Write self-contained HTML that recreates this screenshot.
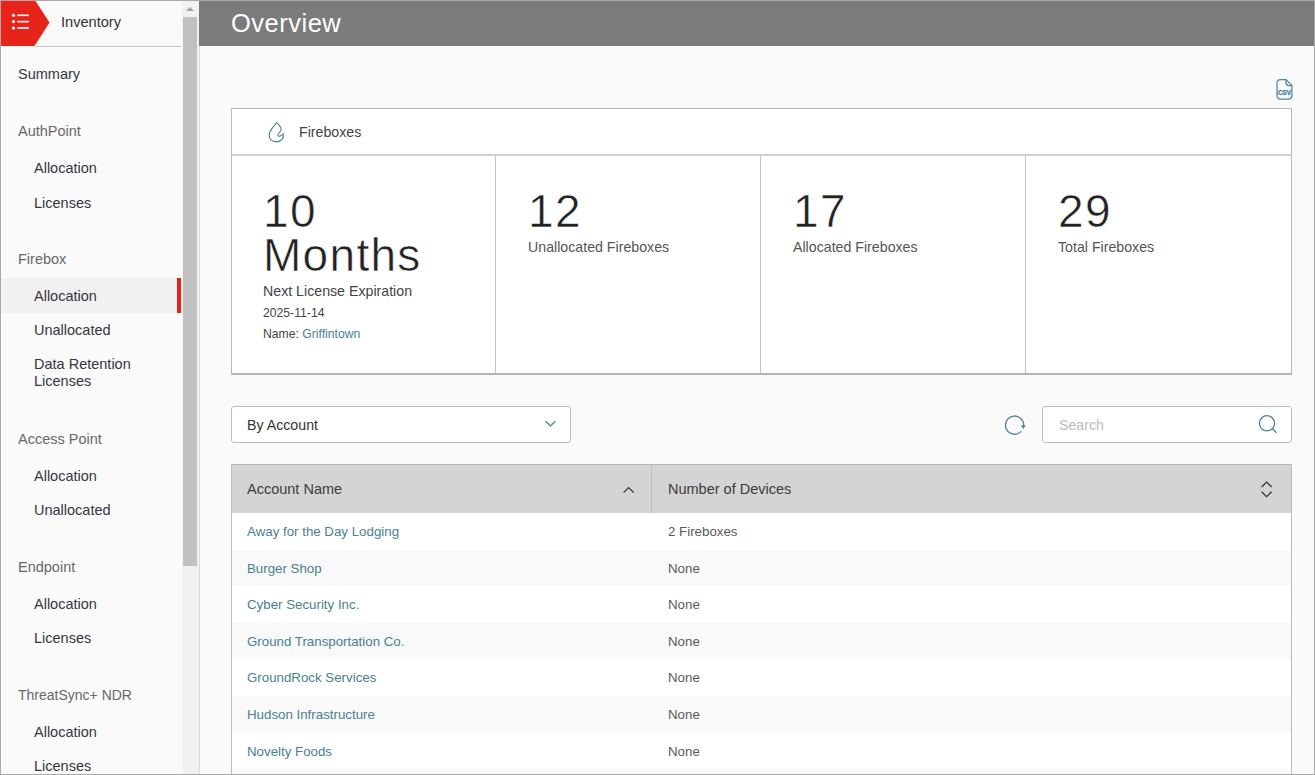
<!DOCTYPE html>
<html><head><meta charset="utf-8">
<style>
*{box-sizing:border-box;margin:0;padding:0}
html,body{width:1315px;height:775px;overflow:hidden;background:#fafafa;font-family:"Liberation Sans",sans-serif;color:#333}
.abs{position:absolute}
#frame{position:absolute;left:0;top:0;width:1315px;height:775px;border:1px solid #a9a9a9;z-index:50;pointer-events:none}
#side{position:absolute;left:1px;top:1px;width:181px;height:773px;background:#fafafa;overflow:hidden}
#sidehead{position:absolute;left:0;top:0;width:180px;height:46px;background:#f9f9f9;border-bottom:1px solid #c6c6c6}
.chev{position:absolute;left:0;top:0}
.inv{position:absolute;left:60px;top:13px;font-size:14.6px;color:#333;line-height:17px}
.nav{position:absolute;font-size:14.5px;line-height:17px;white-space:nowrap}
.sec{left:17px;color:#686868}
.item{left:33px;color:#36363f}
#sel{position:absolute;left:0;top:277px;width:180px;height:35px;background:#f1f1f1}
#selbar{position:absolute;left:176px;top:277px;width:4px;height:35px;background:#e8211a}
#track{position:absolute;left:182px;top:1px;width:17px;height:773px;background:#f1f1f1}
#thumb{position:absolute;left:183px;top:17px;width:14px;height:549px;background:#c1c1c1}
#vline{position:absolute;left:199px;top:1px;width:1px;height:773px;background:#dcdcdc}
#main{position:absolute;left:200px;top:1px;width:1114px;height:773px;background:#fafafa;overflow:visible}
#mhead{position:absolute;left:-1px;top:0;width:1116px;height:45px;background:#7b7b7b}
#mhead span{position:absolute;left:32px;top:7px;font-size:25.5px;line-height:30px;color:#fff;letter-spacing:0.5px}
.card{position:absolute;background:#fff;border:1px solid #b9b9b9}
.big{position:absolute;font-size:46px;line-height:44px;color:#222;letter-spacing:1.3px;margin-top:-1px;-webkit-text-stroke:0.55px #fff}
.lbl{position:absolute;font-size:14.2px;line-height:17px;color:#555;white-space:nowrap}
.sm{position:absolute;font-size:12.2px;line-height:15px;color:#444;white-space:nowrap}
a,.link{color:#4a7f90;text-decoration:none}
.box{position:absolute;background:#fff;border:1px solid #bdbdbd;border-radius:3px}
.th{position:absolute;top:464px;height:48px;background:#d4d4d4}
.row{position:absolute;left:31px;width:1060px;height:37px}
.cell{position:absolute;font-size:13.3px;line-height:16px;white-space:nowrap}
</style></head><body>
<div id="frame"></div>
<div id="side">
  <div id="sidehead">
    <svg class="chev" width="50" height="45" viewBox="0 0 50 45"><polygon points="0,0 34.5,0 48.5,21.5 33.5,45 0,45" fill="#e8231a"/>
      <circle cx="12.5" cy="14.3" r="1.6" fill="#fff"/><circle cx="12.5" cy="20.6" r="1.6" fill="#fff"/><circle cx="12.5" cy="27" r="1.6" fill="#fff"/>
      <rect x="16.2" y="13.5" width="11.8" height="1.6" fill="#fff"/><rect x="16.2" y="19.8" width="11.8" height="1.6" fill="#fff"/><rect x="16.2" y="26.2" width="11.8" height="1.6" fill="#fff"/>
    </svg>
    <div class="inv">Inventory</div>
    <div style="position:absolute;left:0;top:45px;width:34px;height:1px;background:#f3f7f7"></div>
  </div>
  <div id="sel"></div><div id="selbar"></div>
  <div class="nav sec" style="top:65px;color:#36363f">Summary</div>
  <div class="nav sec" style="top:121.5px">AuthPoint</div>
  <div class="nav item" style="top:158.5px">Allocation</div>
  <div class="nav item" style="top:193.5px">Licenses</div>
  <div class="nav sec" style="top:249.5px">Firebox</div>
  <div class="nav item" style="top:286.5px">Allocation</div>
  <div class="nav item" style="top:320.5px">Unallocated</div>
  <div class="nav item" style="top:355px">Data Retention<br>Licenses</div>
  <div class="nav sec" style="top:429.5px">Access Point</div>
  <div class="nav item" style="top:466.5px">Allocation</div>
  <div class="nav item" style="top:500.5px">Unallocated</div>
  <div class="nav sec" style="top:558px">Endpoint</div>
  <div class="nav item" style="top:594.5px">Allocation</div>
  <div class="nav item" style="top:628.5px">Licenses</div>
  <div class="nav sec" style="top:686px;font-size:14px">ThreatSync+ NDR</div>
  <div class="nav item" style="top:723px">Allocation</div>
  <div class="nav item" style="top:757px">Licenses</div>
</div>
<div id="track"></div>
<svg class="abs" style="left:182px;top:1px" width="16" height="16"><polygon points="4,10 12,10 8,6" fill="#a3a3a3"/></svg>
<div id="thumb"></div>
<div id="vline"></div>

<div id="main">
  <div id="mhead"><span>Overview</span></div>

  <!-- CSV icon -->
  <svg class="abs" style="left:1075px;top:76.2px" width="20" height="25" viewBox="0 0 20 25">
    <path d="M5.5 2.6 H11 L16.9 8.5 V18.6 Q16.9 22.2 13.3 22.2 H5.6 Q2 22.2 2 18.6 V6.2 Q2 2.6 5.5 2.6 Z" fill="none" stroke="#4f8597" stroke-width="1.25"/>
    <path d="M11 2.6 V5.4 Q11 8.5 14 8.5 H16.9" fill="none" stroke="#4f8597" stroke-width="1.25"/>
    <text x="9.5" y="18.4" font-size="7.4" font-weight="bold" text-anchor="middle" fill="#4f8597" stroke="#4f8597" stroke-width="0.35" font-family="Liberation Sans" textLength="13" lengthAdjust="spacingAndGlyphs">CSV</text>
  </svg>
  <!-- Cards -->
  <div class="card" style="left:31px;top:107px;width:1061px;height:267px;border-bottom:2px solid #b3b3b3"></div>
  <div class="abs" style="left:32px;top:153px;width:1059px;height:2px;background:#d0d0d0"></div>
  <div class="abs" style="left:295px;top:155px;width:1px;height:217px;background:#c3c3c3"></div>
  <div class="abs" style="left:560px;top:155px;width:1px;height:217px;background:#c3c3c3"></div>
  <div class="abs" style="left:825px;top:155px;width:1px;height:217px;background:#c3c3c3"></div>
  <svg class="abs" style="left:66px;top:119px" width="20" height="25" viewBox="0 0 20 25">
    <path d="M10.5 2.6 C12.6 4.2 15 6.6 15.1 9.2 C15.2 11 13.9 12.2 12.7 13.3 C11.7 14.3 11.5 15.5 12.3 16 C13.5 16.7 16 15.6 17.2 13.7 C17.6 15.1 17.4 17.6 16.2 19.1 C14.8 20.8 12.6 21.8 10.2 21.8 C6.1 21.8 3.2 19 3.2 15.3 C3.2 12.6 4.6 10.1 6.6 7.7 C8 5.9 9.9 4.3 10.5 2.6 Z" fill="none" stroke="#4f8597" stroke-width="1.15" stroke-linejoin="round"/>
  </svg>
  <div class="lbl" style="left:99px;top:123px;color:#444">Fireboxes</div>

  <div class="big" style="left:63px;top:189px">10<br>Months</div>
  <div class="lbl" style="left:63px;top:282px;color:#444">Next License Expiration</div>
  <div class="sm" style="left:63px;top:305px">2025-11-14</div>
  <div class="sm" style="left:63px;top:326px">Name: <span class="link">Griffintown</span></div>

  <div class="big" style="left:328px;top:189px">12</div>
  <div class="lbl" style="left:328px;top:238px">Unallocated Fireboxes</div>
  <div class="big" style="left:593px;top:189px">17</div>
  <div class="lbl" style="left:593px;top:238px">Allocated Fireboxes</div>
  <div class="big" style="left:858px;top:189px">29</div>
  <div class="lbl" style="left:858px;top:238px">Total Fireboxes</div>

  <!-- Dropdown -->
  <div class="box" style="left:31px;top:405px;width:340px;height:37px"></div>
  <div class="lbl" style="left:47px;top:416px;color:#333">By Account</div>
  <svg class="abs" style="left:343px;top:418px" width="14" height="10" viewBox="0 0 14 10"><polyline points="2.5,2.2 7.5,6.9 12.5,2.2" fill="none" stroke="#4b8294" stroke-width="1.3"/></svg>

  <!-- refresh -->
  <svg class="abs" style="left:802px;top:413px" width="26" height="24" viewBox="0 0 26 24">
    <path d="M19.2 17.4 A9.1 9.1 0 1 1 21.7 11.6" fill="none" stroke="#4f8597" stroke-width="1.3"/>
    <polygon points="18.9,11.2 23.8,11.2 21.3,15" fill="#4f8597"/>
  </svg>
  <!-- Search -->
  <div class="box" style="left:842px;top:405px;width:250px;height:37px"></div>
  <div class="lbl" style="left:859px;top:416px;color:#bbb">Search</div>
  <svg class="abs" style="left:1056px;top:412.2px" width="24" height="24" viewBox="0 0 24 24">
    <circle cx="11" cy="10.3" r="7.6" fill="none" stroke="#4b8294" stroke-width="1.3"/>
    <line x1="16.5" y1="15.8" x2="20.5" y2="19.8" stroke="#4b8294" stroke-width="1.3"/>
  </svg>

  <!-- Table -->
  <div class="abs" style="left:31px;top:463px;width:1061px;height:315px;background:#fff;border:1px solid #bcbcbc;border-top-color:#b5b5b5"></div>
  <div class="th" style="left:32px;width:419px"></div>
  <div class="abs" style="left:451px;top:464px;width:1px;height:48px;background:#bdbdbd"></div>
  <div class="th" style="left:452px;width:639px"></div>
  <div class="lbl" style="left:47px;top:480px;color:#3d3d3d;font-size:14.5px">Account Name</div>
  <svg class="abs" style="left:420px;top:483px" width="14" height="12" viewBox="0 0 14 12"><polyline points="3.6,8.6 8.6,3.6 13.6,8.6" fill="none" stroke="#333" stroke-width="1.3"/></svg>
  <div class="lbl" style="left:468px;top:480px;color:#3d3d3d;font-size:14.5px">Number of Devices</div>
  <svg class="abs" style="left:1059px;top:478px" width="14" height="22" viewBox="0 0 14 22"><polyline points="2.6,8 7.6,3.1 12.6,8" fill="none" stroke="#333" stroke-width="1.3"/><polyline points="2.6,12.8 7.6,17.6 12.6,12.8" fill="none" stroke="#333" stroke-width="1.3"/></svg>
  <div class="abs" style="left:32px;top:512px;width:1059px;height:36.6px;background:#fff"></div>
  <div class="cell link" style="left:47px;top:523px">Away for the Day Lodging</div>
  <div class="cell" style="left:468px;top:523px;color:#595959">2 Fireboxes</div>
  <div class="abs" style="left:32px;top:548.6px;width:1059px;height:36.6px;background:#f9f9f9"></div>
  <div class="cell link" style="left:47px;top:559.6px">Burger Shop</div>
  <div class="cell" style="left:468px;top:559.6px;color:#595959">None</div>
  <div class="abs" style="left:32px;top:585.2px;width:1059px;height:36.6px;background:#fff"></div>
  <div class="cell link" style="left:47px;top:596.2px">Cyber Security Inc.</div>
  <div class="cell" style="left:468px;top:596.2px;color:#595959">None</div>
  <div class="abs" style="left:32px;top:621.8px;width:1059px;height:36.6px;background:#f9f9f9"></div>
  <div class="cell link" style="left:47px;top:632.8px">Ground Transportation Co.</div>
  <div class="cell" style="left:468px;top:632.8px;color:#595959">None</div>
  <div class="abs" style="left:32px;top:658.4px;width:1059px;height:36.6px;background:#fff"></div>
  <div class="cell link" style="left:47px;top:669.4px">GroundRock Services</div>
  <div class="cell" style="left:468px;top:669.4px;color:#595959">None</div>
  <div class="abs" style="left:32px;top:695px;width:1059px;height:36.6px;background:#f9f9f9"></div>
  <div class="cell link" style="left:47px;top:706px">Hudson Infrastructure</div>
  <div class="cell" style="left:468px;top:706px;color:#595959">None</div>
  <div class="abs" style="left:32px;top:731.6px;width:1059px;height:36.6px;background:#fff"></div>
  <div class="cell link" style="left:47px;top:742.6px">Novelty Foods</div>
  <div class="cell" style="left:468px;top:742.6px;color:#595959">None</div>
  <div class="abs" style="left:32px;top:768.2px;width:1059px;height:36.6px;background:#f9f9f9"></div>
</div>
</body></html>
